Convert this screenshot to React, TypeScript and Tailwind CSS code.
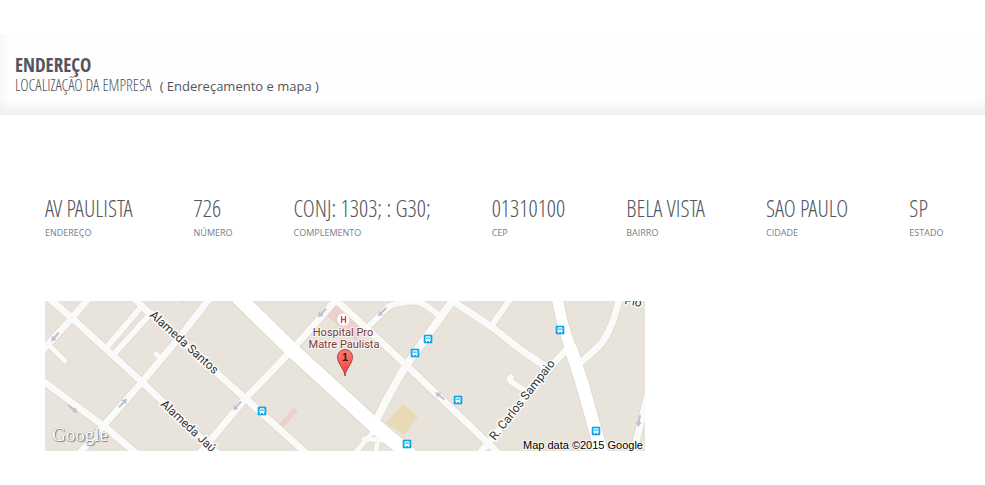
const fields = [
  { label: "Endereço", value: "AV PAULISTA" },
  { label: "Número", value: "726" },
  { label: "Complemento", value: "CONJ: 1303; : G30;" },
  { label: "CEP", value: "01310100" },
  { label: "Bairro", value: "BELA VISTA" },
  { label: "Cidade", value: "SAO PAULO" },
  { label: "Estado", value: "SP" },
];

const streets = [
  { d: "M5 -2L27 17L97 81L172 152", w: 7 },
  { d: "M43 -2L27 17L-3 50", w: 7 },
  { d: "M5 45L20 60", w: 5 },
  { d: "M-2 80L60 126L92 153", w: 7 },
  { d: "M165 -3L133 38L97 81L60 123L34 153", w: 7 },
  { d: "M89 -3L102 10L200 97L262 153", w: 7 },
  { d: "M97 5L62 46", w: 6 },
  { d: "M106 12L70 52", w: 6 },
  { d: "M111 53L117 58", w: 5 },
  { d: "M291 -1L246 50L200 98L154 153", w: 7 },
  { d: "M289 -3L360 63L400 101L443 142L454 153", w: 7 },
  { d: "M322 27L342 7Q346 3 356 2Q372 -2 380 4L394 14", w: 6 },
  { d: "M328 131L309 153M319 138L340 139M333 134L331 153", w: 5 },
  { d: "M403 -3L447 26L476 49L504 68", w: 7 },
  { d: "M466 -3L447 24", w: 6 },
  { d: "M522 48L500 72L443 142L434 153", w: 7 },
  { d: "M484 92L468 82Q462 78 466 76", w: 6 },
  { d: "M575 -3L568 20Q560 40 553 46L536 61", w: 7 },
  { d: "M602 97L588 153", w: 7 },
  { d: "M410 -3L400 10L360 66Q346 90 340 102L328 126", w: 8 },
];

const avenues = [
  { d: "M194 -3L246 48L328 123L364 153", w: 15 },
  { d: "M512 -3L518 24L527 52", w: 11 },
  { d: "M526 48L537 82L557 153", w: 13 },
];

const arrows = [
  { x: 10, y: 36, r: 130 },
  { x: 28, y: 108, r: 40 },
  { x: 78, y: 102, r: -47 },
  { x: 192, y: 105, r: 132 },
  { x: 277, y: 12, r: 133 },
  { x: 337, y: 11, r: 136 },
  { x: 395, y: 95, r: 220 },
  { x: 594, y: 120, r: 100 },
];

const stops = [
  [217, 110],
  [383, 38],
  [370, 52],
  [362, 143],
  [515, 29],
  [413, 99],
  [551, 130],
];

const streetLabel =
  "fill-[#333] stroke-white/90 [stroke-width:3px] [paint-order:stroke] [stroke-linejoin:round] font-['Roboto',sans-serif] text-[12px]";

function StreetMap() {
  return (
    <svg
      viewBox="0 0 600 150"
      role="img"
      aria-label="Mapa da região"
      className="block w-full max-w-[600px] bg-[#e8e4dc]"
    >
      <path d="M281 14L290 2L319 28L311 40Z" fill="#ecd1cd" />
      <path d="M249 106L253 110L238 127L234 123Z" fill="#ecd0cd" />
      <path d="M358 103L373 116L359 134L341 122Z" fill="#e8dab4" />
      <path d="M133 -1L140 -1L137 3Z" fill="#d9dcc9" />
      <g fill="none" strokeLinecap="round" strokeLinejoin="round">
        {streets.map((s) => (
          <path key={s.d} d={s.d} stroke="#d8d2c5" strokeWidth={s.w + 1} />
        ))}
        {avenues.map((s) => (
          <path key={s.d} d={s.d} stroke="#d4cdbf" strokeWidth={s.w + 1} />
        ))}
        {streets.map((s) => (
          <path key={s.d} d={s.d} stroke="#fafaf8" strokeWidth={s.w} />
        ))}
        {avenues.map((s) => (
          <path key={s.d} d={s.d} stroke="#fff" strokeWidth={s.w} />
        ))}
      </g>
      {arrows.map((a) => (
        <path
          key={`${a.x}-${a.y}`}
          d="M-6 -1H1V-3L6 0L1 3V1H-6Z"
          fill="#bcc0d1"
          transform={`translate(${a.x} ${a.y}) rotate(${a.r})`}
        />
      ))}
      {stops.map(([x, y]) => (
        <g key={`${x}-${y}`} transform={`translate(${x - 4} ${y - 4})`}>
          <rect width="8" height="8" rx="0.5" fill="#00adf5" stroke="#1c9ad8" strokeWidth="0.6" />
          <path d="M1.5 2Q1.5 1.2 2.4 1.2H5.6Q6.5 1.2 6.5 2V6H6V7H5V6H3V7H2V6H1.5Z" fill="#fff" />
          <path d="M2.2 2.4H5.8V4H2.2Z" fill="#4cc4f6" />
        </g>
      ))}
      <text transform="translate(104 15) rotate(42)" className={streetLabel}>
        Alameda Santos
      </text>
      <text transform="translate(115 104) rotate(43)" className={streetLabel}>
        Alameda Jaú
      </text>
      <text transform="translate(450 140) rotate(-52)" className={streetLabel}>
        R. Carlos Sampaio
      </text>
      <text transform="translate(579 3) rotate(10)" className={streetLabel}>
        Pio
      </text>
      <circle cx="298.500" cy="18.500" r="6.500" fill="#fff" stroke="#d8c4c0" strokeWidth="0.5" />
      <path d="M296.500 15V22M300.500 15V22M296.500 18.500H300.500" stroke="#d63a35" strokeWidth="1.300" fill="none" />
      <g
        textAnchor="middle"
        className="fill-[#7b3935] stroke-white/70 [stroke-width:2px] [paint-order:stroke] [stroke-linejoin:round] font-['Roboto',sans-serif] text-[11px]"
      >
        <text x="298" y="35">Hospital Pro</text>
        <text x="299" y="47">Matre Paulista</text>
      </g>
      <defs>
        <linearGradient id="pin" x1="0" y1="0" x2="0" y2="1">
          <stop offset="0" stopColor="#fb7d76" />
          <stop offset="1" stopColor="#ee4037" />
        </linearGradient>
      </defs>
      <path
        d="M300 75C299.500 68 292.500 63 292.500 56A7.500 7.500 0 0 1 307.500 56C307.500 63 300.500 68 300 75Z"
        fill="url(#pin)"
        stroke="#a83a35"
        strokeWidth="0.9"
      />
      <text x="300" y="60" textAnchor="middle" className="fill-[#4a1512] font-['Liberation_Sans',sans-serif] text-[11px] font-bold">
        1
      </text>
      <text
        x="7"
        y="140"
        className="fill-white font-['Liberation_Serif',serif] text-[19px] [text-shadow:1px_1px_1px_#777,0_0_1px_#888]"
      >
        Google
      </text>
      <text
        x="598"
        y="148"
        textAnchor="end"
        className="fill-black stroke-white/70 [stroke-width:2px] [paint-order:stroke] font-['Liberation_Sans',sans-serif] text-[11px]"
      >
        Map data ©2015 Google
      </text>
    </svg>
  );
}

const condensedLight =
  "font-['Open_Sans_Condensed_Light','Open_Sans_Light_Condensed','OpenSans-CondensedLight','OpenSansCondensed-Light','Roboto_Condensed',sans-serif] font-light";

export default function App() {
  return (
    <div className="bg-white pt-[34px] font-['Open_Sans',sans-serif] text-[#555560]">
      <header className="bg-[#fefefe] px-[15px] pt-5 pb-5 shadow-[inset_0_-12px_8px_-4px_#efefef,inset_8px_0_8px_-6px_#f6f6f6]">
        <h1 className="font-['Open_Sans_Condensed','Open_Sans',sans-serif] text-[19px] leading-[22px] font-bold">
          ENDEREÇO
        </h1>
        <p className="flex items-baseline gap-2 text-[13px] leading-[18px]">
          <span className={`${condensedLight} text-[16px]`}>LOCALIZAÇÃO DA EMPRESA</span>
          <span>( Endereçamento e mapa )</span>
        </p>
      </header>
      <main className="px-[45px] pt-[77px] pb-8">
        <dl className="flex gap-[61px] whitespace-nowrap">
          {fields.map((f) => (
            <div key={f.label} className="flex flex-col-reverse">
              <dt className="text-[9px] leading-4 text-[#7c7c88] uppercase">{f.label}</dt>
              <dd className={`${condensedLight} text-[23px] leading-[33px]`}>{f.value}</dd>
            </div>
          ))}
        </dl>
        <div className="mt-[60px]">
          <StreetMap />
        </div>
      </main>
    </div>
  );
}
